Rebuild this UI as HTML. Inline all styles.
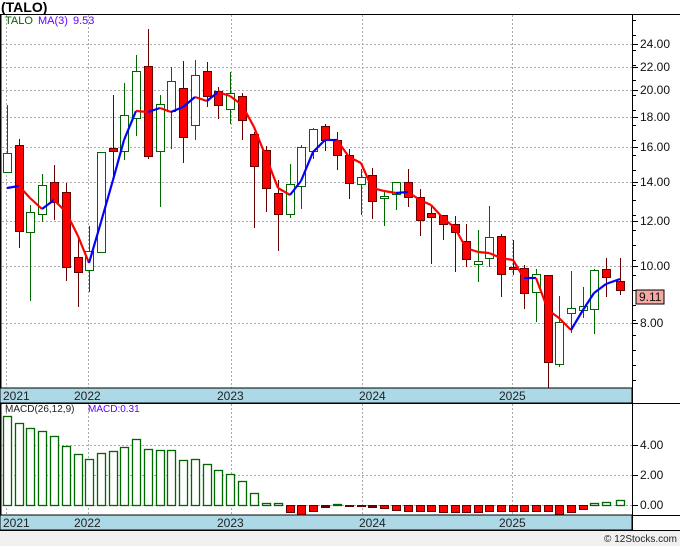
<!DOCTYPE html>
<html><head><meta charset="utf-8"><style>
html,body{margin:0;padding:0;background:#fff;width:680px;height:546px;overflow:hidden;font-family:"Liberation Sans",sans-serif}
svg{display:block}
</style></head><body>
<svg id="c" width="680" height="546" xmlns="http://www.w3.org/2000/svg" font-family="Liberation Sans, sans-serif">
<rect x="0" y="0" width="680" height="546" fill="#fff"/>
<text x="1" y="12" font-size="14" font-weight="bold" fill="#000">(TALO)</text>
<line x1="0" y1="14.5" x2="680" y2="14.5" stroke="#000"/>
<line x1="0.5" y1="14" x2="0.5" y2="531" stroke="#000" stroke-width="2"/>
<line x1="632.5" y1="14" x2="632.5" y2="531" stroke="#000"/>
<g id="grid" stroke="#aaa" stroke-dasharray="2,2" stroke-width="1"></g>
<text x="5" y="24" font-size="11" fill="#060">TALO</text>
<text x="38" y="24" font-size="11" fill="#60f">MA(3)</text>
<text x="73" y="24" font-size="11" fill="#60f">9.53</text>
<g id="cand"></g>
<g id="ma" stroke-width="2.2" fill="none"></g>
<rect x="0" y="388" width="632" height="15" fill="#add8e6" stroke="#000"/>
<g font-size="12" fill="#222">
<text x="3" y="400">2021</text><text x="74" y="400">2022</text><text x="217" y="400">2023</text><text x="359" y="400">2024</text><text x="499" y="400">2025</text>
</g>
<line x1="0" y1="403.5" x2="680" y2="403.5" stroke="#000"/>
<text x="5" y="412" font-size="10" fill="#222">MACD(26,12,9)</text>
<text x="88" y="412" font-size="10" fill="#60f">MACD:0.31</text>
<g id="macd"></g>
<rect x="0" y="515" width="632" height="15" fill="#add8e6" stroke="#000"/>
<g font-size="12" fill="#222">
<text x="3" y="527">2021</text><text x="74" y="527">2022</text><text x="217" y="527">2023</text><text x="359" y="527">2024</text><text x="499" y="527">2025</text>
</g>
<line x1="632" y1="515.5" x2="680" y2="515.5" stroke="#000"/>
<rect x="0" y="531" width="680" height="15" fill="#f0f0f0"/>
<line x1="0" y1="530.5" x2="680" y2="530.5" stroke="#000"/>
<text x="677" y="542" font-size="10" fill="#222" text-anchor="end">© 12Stocks.com</text>
<g font-size="12" fill="#111">
<text x="640" y="48">24.00</text><text x="640" y="71">22.00</text><text x="640" y="94">20.00</text><text x="640" y="121">18.00</text><text x="640" y="151">16.00</text><text x="640" y="186">14.00</text><text x="640" y="225">12.00</text><text x="640" y="270">10.00</text><text x="640" y="327">8.00</text>
<text x="640" y="449">4.00</text><text x="640" y="479">2.00</text><text x="640" y="509">0.00</text>
</g>
<rect x="636" y="290" width="28" height="14" fill="#f4a8a0" stroke="#000"/>
<text x="639" y="301" font-size="12" fill="#111">9.11</text>
<g id="ticks" stroke="#000"></g>
</svg>
<script>
var NS="http://www.w3.org/2000/svg";
function el(p,t,a){var e=document.createElementNS(NS,t);for(var k in a)e.setAttribute(k,a[k]);p.appendChild(e);return e;}
var g=document.getElementById('grid');
[44,67,90,117,147,182,221,266,323].forEach(function(y){el(g,'line',{x1:2,y1:y+.5,x2:632,y2:y+.5});});
[6,88,231,362,512].forEach(function(x){el(g,'line',{x1:x+.5,y1:15,x2:x+.5,y2:388});el(g,'line',{x1:x+.5,y1:404,x2:x+.5,y2:515});});
[445,475,505].forEach(function(y){el(g,'line',{x1:2,y1:y+.5,x2:632,y2:y+.5});});
var tk=document.getElementById('ticks');
for(var y=20;y<388;y+=15)el(tk,'line',{x1:632,y1:y+.5,x2:636,y2:y+.5});
[44,67,90,117,147,182,221,266,323,445,475,505].forEach(function(y){el(tk,'line',{x1:632,y1:y+.5,x2:638,y2:y+.5});});
var C=[[7,105,172,153,172,0],[19,139,248,145,231,1],[30,205,301,212,232,0],[42,174,222,185,214,0],[54,165,220,182,202,1],[66,183,281,192,267,1],[78,239,307,257,272,1],[89,226,292,251,270,0],[101,152,253,152,252,0],[113,95,180,148,151,1],[124,83,160,115,151,0],[136,55,136,71,118,0],[148,29,159,66,156,1],[160,95,207,104,151,0],[171,67,149,81,111,0],[183,61,163,88,137,1],[195,60,140,75,125,0],[207,62,107,71,96,1],[218,87,119,91,105,1],[230,72,124,93,109,0],[242,93,140,96,120,1],[254,132,228,134,166,1],[266,146,212,150,188,1],[278,180,251,193,214,1],[290,164,218,184,214,0],[301,145,209,147,186,0],[313,128,159,129,151,0],[325,124,151,126,140,1],[337,132,170,140,155,1],[349,149,199,155,183,1],[361,169,215,177,184,0],[372,168,219,175,201,1],[384,191,226,196,198,0],[396,182,210,182,194,0],[408,169,207,182,197,1],[420,189,236,197,220,1],[431,206,264,213,217,1],[443,215,240,215,224,1],[455,216,272,224,232,1],[466,224,267,241,259,1],[478,230,282,261,264,0],[489,206,267,237,258,0],[501,234,297,236,274,1],[513,240,275,267,269,1],[524,265,309,268,293,1],[536,269,322,274,292,0],[548,275,388,275,362,1],[559,296,367,322,364,0],[571,271,333,308,313,0],[583,287,318,306,310,0],[594,269,334,270,309,0],[606,258,297,269,277,1],[620,258,295,281,290,1]];
var cg=document.getElementById('cand');
C.forEach(function(c){var col=c[5]?'#600':'#060';
el(cg,'line',{x1:c[0]+.5,y1:c[1],x2:c[0]+.5,y2:c[2],stroke:col});
el(cg,'rect',{x:c[0]-3.5,y:c[3]+.5,width:8,height:Math.max(2,c[4]-c[3]),fill:c[5]?'#f00':'#fff',stroke:col});});
var M=[[7,188],[19,186],[30,198],[42,209],[54,200],[66,212],[78,236],[89,263],[101,222],[113,180],[124,140],[136,111],[148,112],[160,108],[171,112],[183,107],[195,97],[207,101],[218,92],[230,96],[242,105],[254,127],[266,157],[278,188],[290,195],[301,181],[313,152],[325,140],[337,140],[349,157],[361,163],[372,188],[384,191],[396,193],[408,192],[420,200],[431,205],[443,218],[455,228],[466,248],[478,252],[489,253],[501,258],[513,260],[524,278],[536,278],[548,310],[559,318],[571,330],[583,310],[594,293],[606,284],[620,279]];
var mg=document.getElementById('ma');
for(var i=1;i<M.length;i++){el(mg,'line',{x1:M[i-1][0],y1:M[i-1][1],x2:M[i][0],y2:M[i][1],stroke:M[i][1]>M[i-1][1]+0.1?'#f00':'#00f'});}
var B=[416,423,428,431,436,446,454,459,453,451,447,439,449,450,450,460,459,464,470,474,481,493,503,503,512,515,511,507,504,506,505,507,508,510,511,511,511,512,512,512,512,511,511,511,511,511,511,514,512,509,503,502,500];
var bg=document.getElementById('macd');
B.forEach(function(t,i){var x=C[i][0];
if(t<505){el(bg,'rect',{x:x-3.5,y:t+.5,width:8,height:505-t,fill:'#fff',stroke:'#060','stroke-width':1.3});}
else{el(bg,'rect',{x:x-3.5,y:505.5,width:8,height:Math.max(1,t-505),fill:t-505>2?'#f00':'#600',stroke:'#600'});}});
</script>
</body></html>
